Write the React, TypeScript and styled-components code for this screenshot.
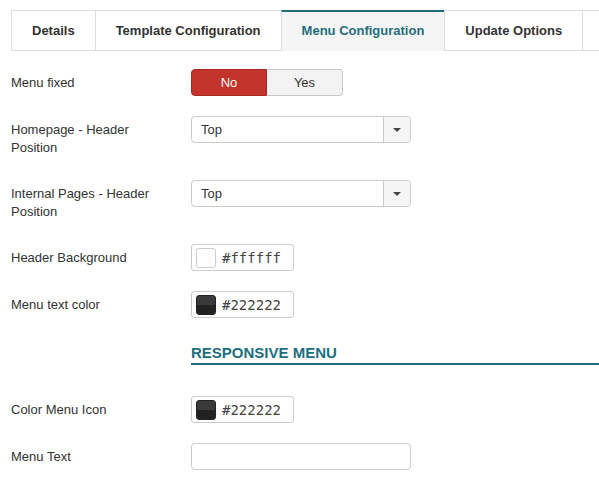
import React from "react";
import styled, { createGlobalStyle } from "styled-components";

const Global = createGlobalStyle`
  html, body { margin: 0; padding: 0; background: #fff; overflow: hidden; }
  body { font-family: "Liberation Sans", Arial, sans-serif; font-size: 13px; color: #333; }
`;

const Page = styled.div`
  width: 599px;
  height: 495px;
  overflow: hidden;
  padding: 10px 0 0 11px;
  box-sizing: border-box;
  display: flex;
  flex-direction: column;
`;

const Tabs = styled.div`
  display: flex;
  flex-wrap: nowrap;
  white-space: nowrap;
  margin-bottom: 18px;
`;

const Tab = styled.div<{ $active?: boolean }>`
  flex: none;
  height: 41px;
  box-sizing: border-box;
  display: flex;
  align-items: center;
  padding: 0 20px;
  min-width: 40px;
  font-weight: bold;
  font-size: 13px;
  border: 1px solid #ddd;
  border-right: none;
  color: ${(p) => (p.$active ? "#1d6f80" : "#333")};
  background: ${(p) => (p.$active ? "#f5f5f5" : "#fff")};
  ${(p) =>
    p.$active &&
    `border-top: 2px solid #1d6f80; border-bottom-color: #f5f5f5; padding-bottom: 1px;`}
`;

const Row = styled.div`
  display: flex;
  align-items: flex-start;
  margin-bottom: 20px;
`;

const Label = styled.div`
  width: 180px;
  flex: none;
  padding: 5px 40px 3px 0;
  line-height: 18px;
  font-size: 13px;
  color: #333;
  box-sizing: border-box;
`;

const Toggle = styled.div`
  display: flex;
  height: 27px;
`;

const ToggleBtn = styled.div<{ $on?: boolean; $first?: boolean }>`
  width: 76px;
  box-sizing: border-box;
  display: flex;
  align-items: center;
  justify-content: center;
  font-size: 13px;
  color: ${(p) => (p.$on ? "#fff" : "#333")};
  background: ${(p) => (p.$on ? "#c2332b" : "#f3f3f3")};
  border: 1px solid ${(p) => (p.$on ? "#a82a23" : "#c8c8c8")};
  border-radius: ${(p) => (p.$first ? "4px 0 0 4px" : "0 4px 4px 0")};
  ${(p) => (!p.$first ? "border-left: none;" : "")}
`;

const Select = styled.div`
  width: 220px;
  height: 27px;
  box-sizing: border-box;
  border: 1px solid #ccc;
  border-radius: 4px;
  display: flex;
  align-items: stretch;
  background: #fff;
  overflow: hidden;
`;

const SelectValue = styled.div`
  flex: 1;
  display: flex;
  align-items: center;
  padding-left: 9px;
  font-size: 13px;
  color: #333;
`;

const SelectArrow = styled.div`
  width: 26px;
  border-left: 1px solid #ccc;
  background: #f5f5f5;
  display: flex;
  align-items: center;
  justify-content: center;
`;

const Caret = styled.span`
  width: 0;
  height: 0;
  border-left: 4px solid transparent;
  border-right: 4px solid transparent;
  border-top: 4px solid #444;
`;

const ColorField = styled.div`
  width: 103px;
  height: 27px;
  box-sizing: border-box;
  border: 1px solid #ccc;
  border-radius: 3px;
  display: flex;
  align-items: center;
  padding-left: 4px;
  gap: 6px;
`;

const Swatch = styled.span<{ $light?: boolean }>`
  width: 20px;
  height: 20px;
  box-sizing: border-box;
  border-radius: 3px;
  border: 1px solid ${(p) => (p.$light ? "#ccc" : "#222")};
  background: ${(p) =>
    p.$light
      ? "#fff"
      : "linear-gradient(to bottom, #3a3a3a 0, #3a3a3a 50%, #222 50%, #222 100%)"};
`;

const ColorText = styled.span`
  font-family: "DejaVu Sans Mono", monospace;
  font-size: 14px;
  color: #444;
`;

const TextInput = styled.div`
  width: 220px;
  height: 27px;
  box-sizing: border-box;
  border: 1px solid #ccc;
  border-radius: 4px;
`;

const Heading = styled.div`
  margin: 6px 0 31px 180px;
  font-size: 15px;
  font-weight: bold;
  line-height: 18px;
  color: #1d6f80;
  padding-bottom: 1px;
  border-bottom: 2px solid #1d6f80;
`;

const SelectBox = ({ value }: { value: string }) => (
  <Select>
    <SelectValue>{value}</SelectValue>
    <SelectArrow>
      <Caret />
    </SelectArrow>
  </Select>
);

const Color = ({ value }: { value: string }) => (
  <ColorField>
    <Swatch $light={value === "#ffffff"} />
    <ColorText>{value}</ColorText>
  </ColorField>
);

export default function App() {
  return (
    <Page>
      <Global />
      <Tabs>
        <Tab>Details</Tab>
        <Tab>Template Configuration</Tab>
        <Tab $active>Menu Configuration</Tab>
        <Tab>Update Options</Tab>
        <Tab />
      </Tabs>
      <Row>
        <Label>Menu fixed</Label>
        <Toggle>
          <ToggleBtn $on $first>No</ToggleBtn>
          <ToggleBtn>Yes</ToggleBtn>
        </Toggle>
      </Row>
      <Row>
        <Label>Homepage - Header Position</Label>
        <SelectBox value="Top" />
      </Row>
      <Row>
        <Label>Internal Pages - Header Position</Label>
        <SelectBox value="Top" />
      </Row>
      <Row>
        <Label>Header Background</Label>
        <Color value="#ffffff" />
      </Row>
      <Row>
        <Label>Menu text color</Label>
        <Color value="#222222" />
      </Row>
      <Heading>RESPONSIVE MENU</Heading>
      <Row>
        <Label>Color Menu Icon</Label>
        <Color value="#222222" />
      </Row>
      <Row>
        <Label>Menu Text</Label>
        <TextInput />
      </Row>
    </Page>
  );
}
